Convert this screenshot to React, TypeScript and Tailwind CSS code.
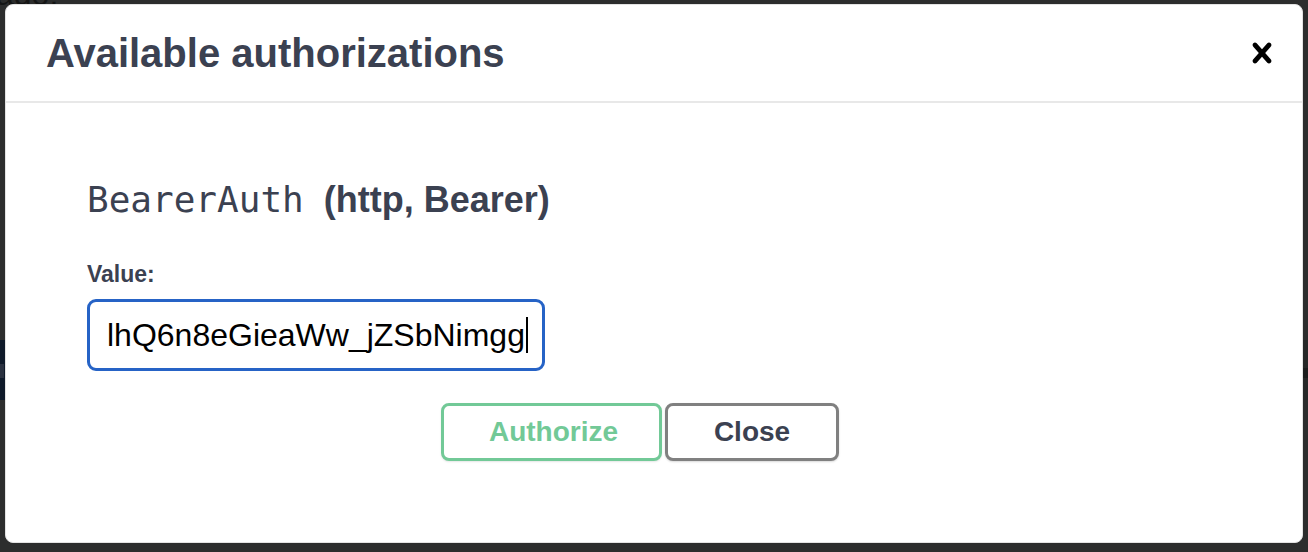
import React from "react";

export default function App() {
  return (
    <div
      className="relative w-[1308px] h-[552px] overflow-hidden bg-[#2c2d2d] flex"
      style={{ fontFamily: '"Liberation Sans", Arial, sans-serif' }}
    >
      {/* faint backdrop content */}
      <div className="absolute left-[-4px] top-[-30px] text-[32px] text-[#141515]">ado:</div>
      <div className="absolute left-0 top-[340px] w-[6px] h-[60px] bg-[#0f1a2a]" />
      <div className="absolute left-0 top-[364px] w-[4px] h-[14px] bg-[#2a3140]" />
      <div className="absolute right-0 top-[340px] w-[6px] h-[60px] bg-[#262727]" />
      <div className="absolute right-0 top-[368px] w-[6px] h-[10px] bg-[#1c1d1d]" />

      <div className="relative ml-[5px] mt-[4px] w-[1298px] h-[539px] bg-white rounded-[8px] border border-[#e3e3e3] flex flex-col">
        <div className="h-[98px] shrink-0 flex items-center justify-between pl-[40px] pr-[20px] border-b-2 border-[#e8e8e8]">
          <h3 className="text-[40px] font-bold text-[#3b4151] leading-none">Available authorizations</h3>
          <button className="w-[40px] h-[40px] flex items-center justify-center">
            <svg width="40" height="40" viewBox="0 0 20 20" aria-hidden="true">
              <path
                fill="#000"
                d="M14.348 14.849c-.469.469-1.229.469-1.697 0L10 11.819l-2.651 3.029c-.469.469-1.229.469-1.697 0-.469-.469-.469-1.229 0-1.697l2.758-3.15-2.759-3.152c-.469-.469-.469-1.228 0-1.697.469-.469 1.228-.469 1.697 0L10 8.183l2.651-3.031c.469-.469 1.228-.469 1.697 0 .469.469.469 1.229 0 1.697l-2.758 3.152 2.758 3.15c.469.469.469 1.229 0 1.698z"
              />
            </svg>
          </button>
        </div>

        <div className="flex flex-col pl-[81px] pt-[79px]">
          <h4 className="flex items-baseline text-[#3b4151] leading-[36px]">
            <span
              className="text-[36px] font-normal"
              style={{ fontFamily: '"DejaVu Sans Mono", "Liberation Mono", monospace' }}
            >
              BearerAuth
            </span>
            <span className="ml-[20px] text-[36px] font-bold">(http, Bearer)</span>
          </h4>

          <label className="mt-[45px] text-[23px] font-bold text-[#3b4151] leading-[23px]">Value:</label>

          <div className="mt-[13px] w-[458px] h-[72px] rounded-[9px] border-[3px] border-[#2663c6] flex items-center pl-[17px] overflow-hidden">
            <span className="text-[32px] text-black whitespace-nowrap leading-none">lhQ6n8eGieaWw_jZSbNimgg</span>
            <span className="ml-[1px] w-[2px] h-[36px] bg-black" />
          </div>
        </div>

        <div className="flex pl-[435px] mt-[32px] gap-[3px]">
          <button className="w-[221px] h-[58px] rounded-[8px] border-[3px] border-[#72c997] bg-white text-[#72c997] text-[28px] font-bold shadow-[0_1px_2px_rgba(0,0,0,0.1)] pl-[4px]">
            Authorize
          </button>
          <button className="w-[174px] h-[58px] rounded-[8px] border-[3px] border-[#808080] bg-white text-[#3b4151] text-[28px] font-bold shadow-[0_1px_2px_rgba(0,0,0,0.15)]">
            Close
          </button>
        </div>
      </div>
    </div>
  );
}
